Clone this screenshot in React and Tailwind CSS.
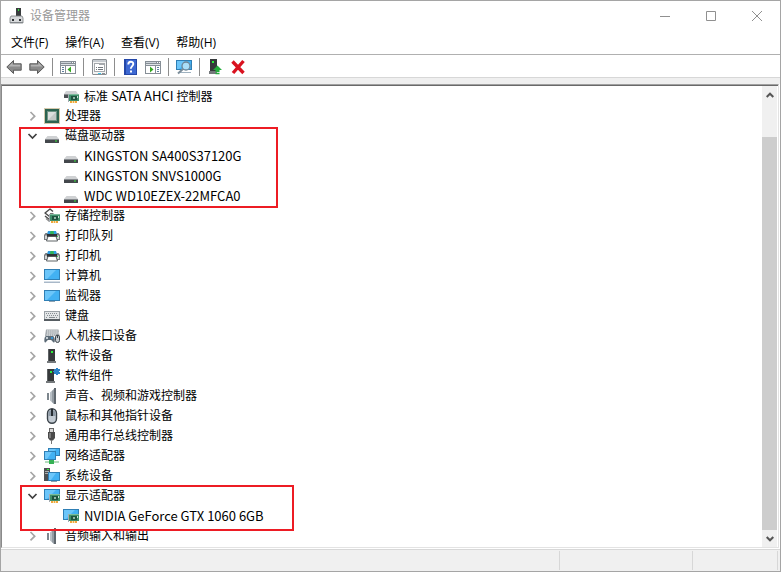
const Svg = ({ children, className = "" }) => (
    <svg
        viewBox="0 0 16 16"
        className={`size-4 shrink-0 overflow-visible ${className}`}
        aria-hidden="true"
    >
        {children}
    </svg>
);

/* green adapter card that sits in the lower right corner of several icons */
const Card = () => (
    <g shapeRendering="crispEdges">
        <rect x="5" y="6" width="1" height="8" fill="#a3abb0" />
        <rect x="6" y="6" width="10" height="7" fill="#3f8f6a" />
        <rect x="6" y="6" width="10" height="1" fill="#7dbb9c" />
        <rect x="8" y="8" width="6" height="4" fill="#1f5440" />
        <rect x="10" y="9" width="2" height="2" fill="#8fb8a4" />
        <rect x="14" y="8" width="1" height="2" fill="#c8e4d6" />
        <rect x="7" y="13" width="7" height="2" fill="#f0a83c" />
        <rect x="9" y="13" width="1" height="2" fill="#fbe0a6" />
        <rect x="11" y="13" width="1" height="2" fill="#fbe0a6" />
    </g>
);

const DiskIcon = () => (
    <Svg>
        <path d="M3.5 8h9l2.5 3H1z" fill="#cfd1d3" />
        <rect x="1" y="11" width="14" height="4" rx=".6" fill="#43474b" />
        <rect x="1" y="11" width="14" height="1" fill="#85898d" />
        <rect x="11" y="12.500" width="2" height="1" fill="#35e83b" />
    </Svg>
);

const DiskCardIcon = () => (
    <Svg>
        <path d="M3 3h10l2 3H1z" fill="#cfd1d3" />
        <rect x="1" y="6" width="14" height="4" rx=".6" fill="#4b4f53" />
        <rect x="1" y="6" width="14" height="1" fill="#85898d" />
        <Card />
    </Svg>
);

const StorageIcon = () => (
    <Svg>
        <path
            d="M9 3.500 6 1 1 5l4.500 3.500L9 6H6M1 8l5 4"
            fill="none"
            stroke="#4b4b4b"
            strokeWidth="1.4"
            strokeLinejoin="round"
        />
        <path d="M2 10.500 5.500 13.500" stroke="#8d8d8d" strokeWidth="1.3" />
        <Card />
    </Svg>
);

const ChipIcon = () => (
    <Svg>
        <rect
            x=".5"
            y=".5"
            width="15"
            height="15"
            fill="none"
            stroke="#a8925a"
            strokeDasharray="1 1"
        />
        <rect x="1" y="1" width="14" height="14" fill="#2c6350" />
        <rect x="3.500" y="3.500" width="9" height="9" fill="#dcdfde" stroke="#6f9485" />
        <path d="M4 12 12 4v8z" fill="#c3c8c6" />
    </Svg>
);

const PrinterIcon = () => (
    <Svg>
        <path d="M4 3h8l1 3H3z" fill="#2f9de0" />
        <path d="M6.500 3h3l.5 3H6z" fill="#2fb457" />
        <path d="M1.500 5h2l-.5 2h10l-.5-2h2L16 7v5H0V7z" fill="#777c80" />
        <path d="M1 7.500h14V11H1z" fill="#d5d7d9" />
        <path d="M3 6h10v3H3z" fill="#303336" />
        <path d="M4 8.500h8l1.500 4.500h-11z" fill="#fff" stroke="#4d5256" strokeWidth=".9" />
        <rect x="13" y="8" width="1" height="1" fill="#35d84a" />
    </Svg>
);

const Screen = ({ x = 0, y = 2, w = 16, h = 10 }) => (
    <g>
        <rect x={x} y={y} width={w} height={h} fill="#2f7fb5" />
        <rect x={x + 1} y={y + 1} width={w - 2} height={h - 2} fill="#42b1f3" />
        <path
            d={`M${x + 1} ${y + 1}h${w - 5}L${x + 3} ${y + h - 1}h-2z`}
            fill="#6cc6fa"
        />
    </g>
);

const ComputerIcon = () => (
    <Svg>
        <Screen y={1} h={11} />
        <rect x="0" y="13" width="16" height="2" fill="#a9b8c8" />
        <rect x="0" y="13" width="16" height="1" fill="#d5dee6" />
    </Svg>
);

const MonitorIcon = () => (
    <Svg>
        <Screen y={2} h={11} />
        <rect x="5" y="13" width="6" height="1" fill="#8fa3b2" />
    </Svg>
);

const KeyboardIcon = () => (
    <Svg>
        <rect x="0" y="3" width="16" height="10" fill="#9aa1a6" />
        <rect x="1" y="4" width="14" height="7" fill="#e3e6e8" />
        <path
            d="M2 5.500h12M3 7.500h12M2 9.500h2M12 9.500h2"
            stroke="#868d92"
            strokeDasharray="1 1"
        />
        <path d="M5 9.500h6" stroke="#868d92" />
        <rect x="0" y="11" width="16" height="2" fill="#565d62" />
    </Svg>
);

const HidIcon = () => (
    <Svg>
        <path d="M2 1.500h12.500l1 6.500H1z" fill="#a3a9ae" />
        <path
            d="M3 3h11M3 5h12M2.500 7h12"
            stroke="#f3f5f6"
            strokeWidth="1.2"
            strokeDasharray="1.4 .7"
        />
        <path
            d="M2 8h7c2 1 2.400 6 1.200 6.500C9 15 8 12 7 12H4c-1 0-2 3-3 2.500S0 9 2 8z"
            fill="#5c6b77"
        />
        <circle cx="3" cy="10" r="1" fill="#e6edf2" />
        <circle cx="8" cy="10" r="1" fill="#35a0e8" />
        <rect x="11.500" y="7" width="4" height="7.500" rx="2" fill="#c3c9ce" stroke="#3f474d" />
        <path d="M13.500 7v3" stroke="#3f474d" />
    </Svg>
);

const Tower = ({ x = 4 }) => (
    <g>
        <rect x={x} y="1" width="7" height="12" fill="#36393b" />
        <rect x={x} y="1" width="1" height="12" fill="#5e6264" />
        <rect x={x + 3} y="3" width="2" height="2" fill="#2bf03a" />
        <rect x={x - 1} y="13" width="9" height="2" fill="#75797c" />
    </g>
);

const SoftwareIcon = () => (
    <Svg>
        <Tower />
    </Svg>
);

const ComponentIcon = () => (
    <Svg>
        <Tower x={3} />
        <path d="M10 1h2V0h2v1h2v2h-1v1h1v2h-2v1h-2V6h-2V4H9V3h1z" fill="#2b83c8" />
    </Svg>
);

const SpeakerIcon = () => (
    <Svg>
        <rect x="3" y="5" width="2" height="7" fill="#7d868d" />
        <path d="M6 4.500 10 1v15l-4-3.500z" fill="#b8bfc5" />
        <path d="M8 3 10 1v15l-2-2z" fill="#949ca3" />
        <rect x="10" y="0" width="2" height="16" fill="#5f676e" />
    </Svg>
);

const MouseIcon = () => (
    <Svg>
        <rect
            x="3.500"
            y=".7"
            width="9"
            height="14.600"
            rx="4.500"
            fill="#c3cbd3"
            stroke="#3a4249"
            strokeWidth="1.400"
        />
        <path d="M4.500 8V4L7 2v6zM9 2l2.500 2v4H9z" fill="#8e9aa6" />
        <rect x="7" y="1" width="2" height="7" fill="#272d32" />
    </Svg>
);

const UsbIcon = () => (
    <Svg>
        <rect x="5.500" y=".5" width="4" height="4" fill="#d8d8d8" stroke="#666" />
        <path d="M4 4h7v6l-2 2.500H6L4 10z" fill="#4a4a4a" />
        <rect x="5" y="5" width="2" height="5" fill="#7c7c7c" />
        <rect x="7" y="12" width="1" height="4" fill="#777" />
    </Svg>
);

const NetworkIcon = () => (
    <Svg>
        <Screen x={4} y={0} w={12} h={8} />
        <Screen x={0} y={3} w={12} h={9} />
        <rect x="1" y="13" width="14" height="2" fill="#b5dcbe" />
        <rect x="5" y="12" width="5" height="4" fill="#35b154" />
    </Svg>
);

const SystemIcon = () => (
    <Svg>
        <rect x="0" y="0" width="6" height="13" fill="#4c5053" />
        <rect x="1" y="3" width="4" height="1" fill="#a9adb0" />
        <rect x="3" y="1" width="2" height="1" fill="#2bf03a" />
        <rect x="1" y="5" width="3" height="1" fill="#a9adb0" />
        <Screen x={4} y={4} w={12} h={9} />
        <rect x="7" y="13" width="6" height="1" fill="#8ba0b0" />
    </Svg>
);

const DisplayIcon = () => (
    <Svg>
        <Screen y={1} h={11} />
        <Card />
    </Svg>
);

const Arrow = ({ flip }) => (
    <Svg className={flip ? "-scale-x-100" : ""}>
        <path
            d="M.8 8 7.500 1.500v3.300h7.700v6.400H7.500v3.300z"
            fill="#8b8b8b"
            stroke="#5a5a5a"
            strokeLinejoin="round"
        />
        <path d="M2.500 7.500 6.500 3.800v2h7.700v1.700z" fill="#b4b4b4" />
    </Svg>
);

const PanelIcon = ({ flip }) => (
    <Svg>
        <g shapeRendering="crispEdges">
            <rect x="0" y="2" width="16" height="13" fill="#868e96" />
            <rect x="1" y="3" width="10" height="1" fill="#cdd3d9" />
            <rect x="12" y="3" width="1" height="1" fill="#fff" />
            <rect x="14" y="3" width="1" height="1" fill="#fff" />
            <rect x="1" y="5" width="14" height="1" fill="#dde2e6" />
        </g>
        <g transform={flip ? "matrix(-1 0 0 1 16 0)" : undefined}>
            <rect x="1" y="7" width="4" height="7" fill="#fff" />
            <rect x="6" y="7" width="9" height="7" fill="#fff" />
            <path d="M2 8.500h2M2 10.500h2M2 12.500h2" stroke="#5f7f9e" />
            <path d="M11 7.500v6l-3.500-3z" fill="#35a822" />
        </g>
    </Svg>
);

const PropertiesIcon = () => (
    <Svg>
        <rect x="1.500" y=".5" width="14" height="15" rx=".5" fill="#f4f4f4" stroke="#8a8f94" />
        <rect x="2" y="1" width="13" height="2" fill="#c6cbd0" />
        <rect x="3.500" y="4.500" width="10" height="8" fill="#fff" stroke="#a5a9ad" />
        <path d="M8 4h6v2H8z" fill="#a5a9ad" />
        <path d="M5 8.500h1M7 8.500h5M5 10.500h1M7 10.500h5" stroke="#70767c" />
        <path d="M7 14.500h3" stroke="#3bc4ea" />
        <path d="M11 14.500h3" stroke="#8a8f94" />
    </Svg>
);

const HelpIcon = () => (
    <Svg>
        <rect x="2" y="0" width="13" height="16" fill="#2447a8" />
        <rect x="4" y="1" width="10" height="14" fill="#3d68d2" />
        <path
            d="M6.300 5.500C6.300 2 11.300 2 11.300 5c0 2-2.500 2.200-2.500 4.700"
            fill="none"
            stroke="#fff"
            strokeWidth="1.900"
        />
        <rect x="8" y="11.500" width="2" height="2" fill="#fff" />
    </Svg>
);

const ScanIcon = () => (
    <Svg>
        <Screen x={0} y={1} w={16} h={10} />
        <rect x="4" y="13" width="11" height="1" fill="#9fb2c0" />
        <circle cx="10" cy="7" r="4" fill="#a9def9" stroke="#6d8698" strokeWidth="1.300" />
        <path d="M7 10 2 14.500" stroke="#7b8d9a" strokeWidth="2" />
    </Svg>
);

const UpdateIcon = () => (
    <Svg>
        <rect x="3" y="0" width="7" height="12" fill="#36393b" />
        <rect x="5" y="2" width="2" height="2" fill="#2bf03a" />
        <rect x="2" y="12" width="8" height="3" fill="#75797c" />
        <path d="M10.500 6.500 15 11h-2.500v2h-4v-2H6z" fill="#25ad3c" />
        <path d="M8.500 14.500h4" stroke="#25ad3c" strokeWidth="1.500" />
    </Svg>
);

const RemoveIcon = () => (
    <Svg>
        <path d="m2.500 2.500 11 11.500M13.500 2 3 14" stroke="#d9121f" strokeWidth="3.400" />
    </Svg>
);

const TitleIcon = () => (
    <Svg>
        <rect x="8" y="0" width="5" height="8" fill="#3a3d3f" />
        <rect x="10" y="1" width="1" height="2" fill="#2bf03a" />
        <path d="M3 8h11l1 2v5H2v-5z" fill="#d7d9db" stroke="#7a7e82" strokeWidth=".8" />
        <rect x="4" y="11" width="2" height="2" fill="#2d3033" />
        <rect x="11" y="11" width="2" height="2" fill="#2d3033" />
        <rect x="2" y="14" width="13" height="1" fill="#84888c" />
    </Svg>
);

const Expander = ({ open, label }) => (
    <button
        type="button"
        aria-label={label}
        aria-expanded={open}
        className="flex size-4 shrink-0 items-center justify-center"
    >
        <svg viewBox="0 0 16 16" className="size-4" fill="none">
            {open ? (
                <path d="m3.500 6 4 4 4-4" stroke="#404040" strokeWidth="1.700" />
            ) : (
                <path d="m5.500 4 4.200 4.200-4.200 4.200" stroke="#a6a6a6" strokeWidth="1.700" />
            )}
        </svg>
    </button>
);

const TreeRow = ({ node }) => (
    <div className="flex h-5 items-center">
        <Expander open={!!node.children} label={node.name} />
        <span className="mr-[5px] ml-[3px]">
            <node.icon />
        </span>
        <span>{node.name}</span>
    </div>
);

/* model names are latin and run one size larger than the chinese labels */
const Latin = ({ children }) => (
    <span className="font-['Noto_Sans_CJK_SC',sans-serif] text-[13px] leading-5">{children}</span>
);

const ChildRow = ({ icon: Icon, children }) => (
    <li role="treeitem" className="flex h-5 items-center gap-[5px] pl-[38px]">
        <Icon />
        <span>{children}</span>
    </li>
);

const devices = [
    { name: "处理器", icon: ChipIcon },
    {
        name: "磁盘驱动器",
        icon: DiskIcon,
        mark: "-left-[6px] top-px h-[81px] w-[259px]",
        children: ["KINGSTON SA400S37120G", "KINGSTON SNVS1000G", "WDC WD10EZEX-22MFCA0"],
    },
    { name: "存储控制器", icon: StorageIcon },
    { name: "打印队列", icon: PrinterIcon },
    { name: "打印机", icon: PrinterIcon },
    { name: "计算机", icon: ComputerIcon },
    { name: "监视器", icon: MonitorIcon },
    { name: "键盘", icon: KeyboardIcon },
    { name: "人机接口设备", icon: HidIcon },
    { name: "软件设备", icon: SoftwareIcon },
    { name: "软件组件", icon: ComponentIcon },
    { name: "声音、视频和游戏控制器", icon: SpeakerIcon },
    { name: "鼠标和其他指针设备", icon: MouseIcon },
    { name: "通用串行总线控制器", icon: UsbIcon },
    { name: "网络适配器", icon: NetworkIcon },
    { name: "系统设备", icon: SystemIcon },
    {
        name: "显示适配器",
        icon: DisplayIcon,
        mark: "-left-[5px] -top-px h-[46px] w-[274px]",
        children: ["NVIDIA GeForce GTX 1060 6GB"],
    },
    { name: "音频输入和输出", icon: SpeakerIcon },
];

const Divider = () => <span className="h-[18px] w-px bg-[#8d8d8d]" />;

const Tool = ({ label, children }) => (
    <button type="button" aria-label={label}>
        {children}
    </button>
);

const App = () => {
    return (
        <div className="flex h-screen flex-col border border-[#a5a5a5] bg-white font-['Open_Sans','Noto_Sans_CJK_SC',sans-serif] text-xs leading-5 text-black">
            <header className="flex h-[29px] shrink-0 items-center pl-[7px]">
                <TitleIcon />
                <h1 className="ml-1.5 flex-1 text-[#999]">设备管理器</h1>
                {[
                    ["最小化", "M3 8.500h10"],
                    ["最大化", "M3.500 3.500h9v9h-9z"],
                    ["关闭", "m3 3 10 10M13 3 3 13"],
                ].map(([label, d]) => (
                    <button
                        key={label}
                        type="button"
                        aria-label={label}
                        className="flex h-full w-[46px] items-center justify-center"
                    >
                        <svg viewBox="0 0 16 16" className="size-4" fill="none" stroke="#909090">
                            <path d={d} />
                        </svg>
                    </button>
                ))}
            </header>

            <nav className="flex h-[25px] shrink-0 items-center gap-[17px] border-b border-[#b0b0b0] px-2.5 pt-0.5">
                {["文件(F)", "操作(A)", "查看(V)", "帮助(H)"].map((item) => (
                    <button key={item} type="button">
                        {item}
                    </button>
                ))}
            </nav>

            <div className="flex h-[23px] shrink-0 items-center gap-[7px] border-b border-[#d7d7d7] px-[5px] pt-px">
                <Tool label="后退"><Arrow /></Tool>
                <Tool label="前进"><Arrow flip /></Tool>
                <Divider />
                <Tool label="显示控制台树"><PanelIcon /></Tool>
                <Divider />
                <Tool label="属性"><PropertiesIcon /></Tool>
                <Divider />
                <Tool label="帮助"><HelpIcon /></Tool>
                <Tool label="操作窗格"><PanelIcon flip /></Tool>
                <Divider />
                <Tool label="扫描检测硬件改动"><ScanIcon /></Tool>
                <Divider />
                <Tool label="更新驱动程序"><UpdateIcon /></Tool>
                <Tool label="卸载设备"><RemoveIcon /></Tool>
            </div>

            <div className="h-1.5 shrink-0 bg-[#efefef]" />

            <main className="mr-px flex min-h-0 flex-1 border-t border-r border-b border-l border-t-[#a0a0a0] border-r-[#e3e3e3] border-b-[#e3e3e3] border-l-[#8a8a8a]">
                <div className="flex min-w-0 flex-1 border-t border-t-[#696969]">
                    <ul role="tree" className="min-w-0 flex-1 overflow-hidden pl-[23px] whitespace-nowrap">
                        <ChildRow icon={DiskCardIcon}>
                            标准 <Latin>SATA AHCI</Latin> 控制器
                        </ChildRow>
                        {devices.map((node) => (
                            <li key={node.name} role="treeitem" className="relative">
                                <TreeRow node={node} />
                                {node.children && (
                                    <ul role="group">
                                        {node.children.map((child) => (
                                            <ChildRow key={child} icon={node.icon}>
                                                <Latin>{child}</Latin>
                                            </ChildRow>
                                        ))}
                                    </ul>
                                )}
                                {node.mark && (
                                    <span
                                        className={`pointer-events-none absolute z-10 border-2 border-[#ed1c24] ${node.mark}`}
                                    />
                                )}
                            </li>
                        ))}
                    </ul>
                    <div className="mr-px flex w-[15px] flex-col bg-[#f0f0f0]">
                        <button type="button" aria-label="向上滚动" className="flex h-[17px] items-center justify-center">
                            <svg viewBox="0 0 8 8" className="size-2" fill="none">
                                <path d="m.7 6 3.300-3.300L7.300 6" stroke="#555" strokeWidth="2" />
                            </svg>
                        </button>
                        <div className="flex flex-1 flex-col pt-[34px]">
                            <div className="flex-1 bg-[#cdcdcd]" />
                        </div>
                        <button type="button" aria-label="向下滚动" className="flex h-[17px] items-center justify-center">
                            <svg viewBox="0 0 8 8" className="size-2" fill="none">
                                <path d="m.7 2 3.300 3.300L7.300 2" stroke="#555" strokeWidth="2" />
                            </svg>
                        </button>
                    </div>
                </div>
            </main>

            <footer className="mt-px flex h-[22px] shrink-0 border-t border-[#d7d7d7] bg-[#f0f0f0] py-px pr-0.5">
                <div className="flex-1 border-r border-[#d7d7d7]" />
                <div className="w-[133px] border-r border-[#d7d7d7]" />
                <div className="w-[85px] border-r border-[#d7d7d7]" />
            </footer>
        </div>
    );
};

export default App;
